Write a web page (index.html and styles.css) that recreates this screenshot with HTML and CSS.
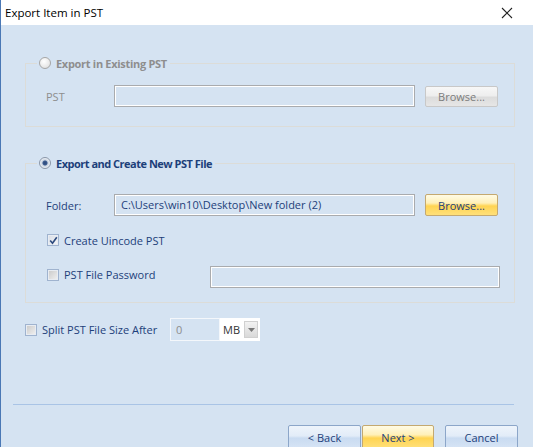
FILE: index.html
```html
<!DOCTYPE html>
<html>
<head>
<meta charset="utf-8">
<link rel="stylesheet" href="styles.css">
</head>
<body>
<div class="window">
  <div class="titlebar">
    <span class="title">Export Item in PST</span>
    <svg class="close" width="12" height="12" viewBox="0 0 12 12"><path d="M1 1 L11 11 M11 1 L1 11" stroke="#222" stroke-width="1.1" fill="none"/></svg>
  </div>
  <div class="content">
    <fieldset class="group">
      <legend class="legend disabled"><span class="radio"></span><span>Export in Existing PST</span></legend>
      <div class="row row-pst">
        <span class="label disabled-text">PST</span>
        <div class="input"></div>
        <button class="btn btn-disabled">Browse...</button>
      </div>
    </fieldset>

    <fieldset class="group group2">
      <legend class="legend active"><span class="radio checked"></span><span>Export and Create New PST File</span></legend>
      <div class="row row-folder">
        <span class="label">Folder:</span>
        <div class="input">C:\Users\win10\Desktop\New folder (2)</div>
        <button class="btn btn-yellow">Browse...</button>
      </div>
      <div class="row row-check1">
        <span class="check checked"><svg width="9" height="9" viewBox="0 0 9 9"><path d="M1.2 4.5 L3.5 7.3 L7.8 1.2" stroke="#2c4a7e" stroke-width="1.6" fill="none"/></svg></span>
        <span class="label">Create Uincode PST</span>
      </div>
      <div class="row row-check2">
        <span class="check"></span>
        <span class="label pw-label">PST File Password</span>
        <div class="input pw-input"></div>
      </div>
    </fieldset>

    <div class="row split">
      <span class="check"></span>
      <span class="label split-label">Split PST File Size After</span>
      <div class="num">0</div>
      <div class="combo"><span>MB</span><span class="drop"><svg width="7" height="4" viewBox="0 0 7 4"><path d="M0 0 H7 L3.5 4 Z" fill="#777"/></svg></span></div>
    </div>

    <div class="separator"></div>

    <div class="buttons">
      <button class="btn btn-blue">&lt; Back</button>
      <button class="btn btn-yellow btn-next">Next &gt;</button>
      <button class="btn btn-blue btn-cancel">Cancel</button>
    </div>
  </div>
</div>
</body>
</html>
```
FILE: styles.css
```css
* { box-sizing: border-box; }
html, body { margin: 0; padding: 0; }
body {
  font-family: "Open Sans", "Noto Sans", sans-serif;
  font-size: 11px;
  overflow: hidden;
}
.window {
  width: 533px;
  height: 447px;
  background: #d5e3f2;
  border-left: 1px solid #4a78b5;
  overflow: hidden;
}
.titlebar {
  height: 25px;
  background: #fff;
  display: flex;
  align-items: center;
  justify-content: space-between;
  padding: 0 20px 0 4px;
}
.title {
  font-size: 11.5px;
  color: #000;
}
.content {
  padding-top: 31px;
}
.group {
  margin: 0 0 0 24px;
  width: 490px;
  border: 1px solid #dcdcd8;
  padding: 0 0 19px 20px;
  min-width: 0;
}
.group2 {
  margin-top: 29px;
  padding-bottom: 14px;
}
.legend {
  margin-left: -9px;
  padding: 0 3px 0 2px;
  display: flex;
  align-items: center;
  gap: 5px;
  height: 14px;
  font-weight: bold;
  font-size: 11px;
}
.legend.disabled { color: #8e8e8e; letter-spacing: -0.3px; }
.legend.active { color: #1d3f7a; letter-spacing: -0.5px; }
.radio {
  width: 12px;
  height: 12px;
  border-radius: 50%;
  border: 1px solid #a6a6a6;
  background: radial-gradient(circle at 40% 35%, #ffffff 0%, #e9e9e9 60%, #d6d6d6 100%);
  display: inline-block;
}
.radio.checked {
  border-color: #8a96a8;
  background: radial-gradient(circle, #2d4a7a 0, #3b5a8f 2px, #c9d3e0 3px, #eef2f7 5px);
}
.row {
  display: flex;
  align-items: center;
}
.label {
  color: #1d3f7a;
}
.disabled-text { color: #8e8e8e; }
.row-pst { margin-top: 15px; }
.row-pst .label, .row-folder .label { width: 68px; }
.input {
  width: 301px;
  height: 22px;
  border: 1px solid #a9abae;
  box-shadow: inset 0 0 0 1px #fff;
  padding: 0 6px;
  line-height: 20px;
  color: #1d3f7a;
  white-space: nowrap;
  overflow: hidden;
}
.btn {
  font-family: "Open Sans", "Noto Sans", sans-serif;
  font-size: 11px;
  height: 21px;
  width: 73px;
  margin-left: 10px;
  padding: 0;
  border-radius: 2px;
  cursor: default;
}
.btn-disabled {
  border: 1px solid #c8c8c8;
  color: #7c7c7c;
  background: linear-gradient(#f7f7f7 0%, #eeeeee 45%, #dcdcdc 55%, #e6e6e6 100%);
  margin-top: 1px;
}
.btn-yellow {
  border: 1px solid #c4a970;
  color: #1d3f7a;
  background: linear-gradient(#fffbe5 0%, #fff0b8 40%, #ffd452 55%, #ffe07a 100%);
  height: 22px;
}
.row-folder { margin-top: 24px; }
.row-check1 { margin-top: 17px; height: 14px; }
.row-check2 { margin-top: 19px; align-items: flex-start; }
.row-check2 .check { margin-top: 3px; }
.row-check2 .label { margin-top: 1px; line-height: 15px; }
.check {
  width: 12px;
  height: 12px;
  margin-left: 1px;
  margin-right: 5px;
  border: 1px solid #9fb3cf;
  box-shadow: inset 0 0 0 1px #e8ecf2;
  background: linear-gradient(135deg, #c8c8c8, #f2f2f2);
  display: inline-flex;
  align-items: center;
  justify-content: center;
  flex: none;
}
.check.checked {
  background: linear-gradient(135deg, #d8dde6, #f5f6f8);
}
.pw-label { width: 146px; }
.pw-input { width: 290px; }
.split {
  margin: 15px 0 0 24px;
}
.split .check { margin-left: 0; }
.split-label { width: 128px; }
.num {
  width: 50px;
  height: 23px;
  border: 1px solid #f4f7fb;
  background: #d5e3f2;
  color: #8e8e8e;
  padding-left: 5px;
  line-height: 21px;
}
.combo {
  width: 40px;
  height: 23px;
  background: #fff;
  display: flex;
  align-items: center;
  padding-left: 3px;
  color: #333;
  gap: 4px;
}
.drop {
  width: 14px;
  height: 17px;
  border: 1px solid #d0d0d0;
  background: linear-gradient(#f2f2f2, #d9d9d9);
  display: flex;
  align-items: center;
  justify-content: center;
}
.separator {
  margin: 63px 0 0 12px;
  width: 501px;
  height: 1px;
  background: #a9c4e6;
}
.buttons {
  display: flex;
  margin: 20px 0 0 287px;
}
.buttons .btn { margin-left: 0; height: 24px; }
.btn-blue {
  width: 73px;
  border: 1px solid #8ca6c9;
  color: #1d3f7a;
  background: linear-gradient(#eef4fb 0%, #e2ecf8 45%, #c9dbf1 55%, #d6e4f5 100%);
}
.btn-next { width: 72px; margin-left: 1px !important; }
.btn-cancel { margin-left: 11px !important; }
```
